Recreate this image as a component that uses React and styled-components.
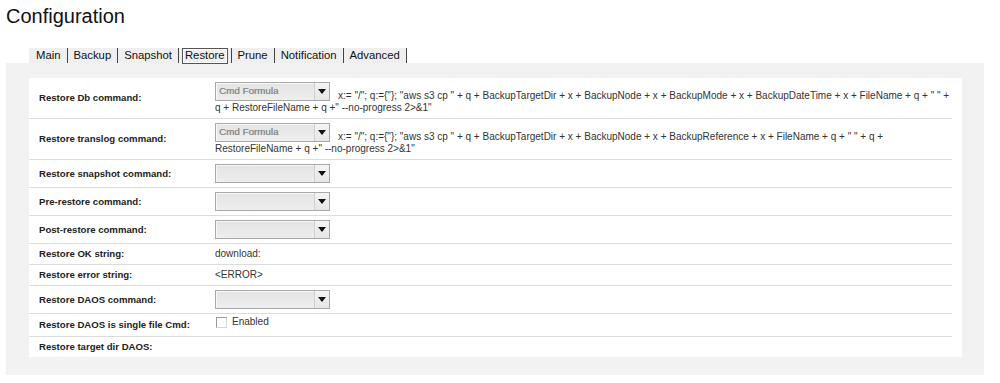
import React from 'react';
import styled, { createGlobalStyle } from 'styled-components';

const GlobalStyle = createGlobalStyle`
  html, body {
    margin: 0;
    padding: 0;
    background: #fff;
    font-family: "Liberation Sans", Arial, sans-serif;
    color: #222;
  }
`;

const Page = styled.div`
  padding: 4px 16px 0 6px;
`;

const Title = styled.h1`
  margin: 0;
  font-size: 20px;
  font-weight: normal;
  line-height: 24px;
  color: #111;
`;

const TabStrip = styled.ul`
  display: flex;
  list-style: none;
  margin: 20px 0 0 23px;
  padding: 0 0 0 1px;
  width: fit-content;
  background: #efefef;
  height: 15px;
  align-items: stretch;
`;

const TabItem = styled.li`
  display: flex;
  align-items: center;
  padding: 0 3px;
  border-right: 1px solid #444;
  font-size: 11.3px;
  line-height: 13px;
  color: #111;
`;

const TabLink = styled.span`
  padding: 0 ${p => (p.$active ? '2px' : '3px')};
  border: ${p => (p.$active ? '1px solid #555' : 'none')};
  box-shadow: ${p => (p.$active ? 'inset 0 0 0 1px #fff' : 'none')};
  height: ${p => (p.$active ? '14px' : 'auto')};
  display: flex;
  align-items: center;
`;

const Panel = styled.div`
  background: #f2f2f2;
  padding: 15px 22px 18px 23px;
`;

const Sheet = styled.div`
  background: #fff;
  padding-right: 10px;
`;

const Row = styled.div`
  display: grid;
  grid-template-columns: 186px 1fr;
  align-items: center;
  border-bottom: ${p => (p.$last ? 'none' : '1px solid #dcdcdc')};
`;

const Label = styled.div`
  padding: 4px 10px;
  font-size: 9.6px;
  font-weight: bold;
  line-height: 12px;
  color: #222;
`;

const Value = styled.div`
  padding: ${p => p.$pad};
  font-size: 10px;
  line-height: 12px;
  color: #333;
  min-height: 12px;
`;

const Select = styled.span`
  display: inline-flex;
  align-items: stretch;
  box-sizing: border-box;
  width: 115px;
  height: 19px;
  vertical-align: ${p => (p.$inline ? 'text-bottom' : 'top')};
  margin-right: 8px;
  border: 1px solid #a9a9a9;
  background: linear-gradient(#e4e4e4, #eeeeee);
  box-shadow: inset 1px 1px 0 #f8f8f8;
`;

const SelectText = styled.span`
  flex: 1;
  padding-left: 3px;
  font-size: 9.8px;
  line-height: 15px;
  color: #8f8f8f;
  text-shadow: 0.3px 0 0 #8f8f8f;
  overflow: hidden;
  white-space: nowrap;
`;

const SelectButton = styled.span`
  width: 14px;
  display: flex;
  align-items: center;
  justify-content: center;
  border-left: 1px solid #d0d0d0;
  background: linear-gradient(#f4f4f4, #e6e6e6);
`;

const Arrow = () => (
  <svg width="8" height="5" viewBox="0 0 8 5">
    <path d="M0 0h8L4 5z" fill="#111" />
  </svg>
);

const Dropdown = ({ text, inline }) => (
  <Select $inline={inline}>
    <SelectText>{text}</SelectText>
    <SelectButton>
      <Arrow />
    </SelectButton>
  </Select>
);

const CheckWrap = styled.label`
  display: inline-flex;
  align-items: center;
  gap: 5px;
  margin-left: 1px;
  position: relative;
  top: -1px;
`;

const CheckBox = styled.span`
  display: inline-block;
  width: 9px;
  height: 9px;
  border: 1px solid #9a9a9a;
  border-right-color: #d6d6d6;
  border-bottom-color: #d6d6d6;
  background: #fdfdfd;
`;

const rows = [
  {
    label: 'Restore Db command:',
    select: 'Cmd Formula',
    text:
      'x:= "/"; q:={"}; "aws s3 cp " + q + BackupTargetDir + x + BackupNode + x + BackupMode + x + BackupDateTime + x + FileName + q + " " + q + RestoreFileName + q +" --no-progress 2>&1"',
  },
  {
    label: 'Restore translog command:',
    select: 'Cmd Formula',
    text:
      'x:= "/"; q:={"}; "aws s3 cp " + q + BackupTargetDir + x + BackupNode + x + BackupReference + x + FileName + q + " " + q + RestoreFileName + q +" --no-progress 2>&1"',
  },
  { label: 'Restore snapshot command:', select: '' },
  { label: 'Pre-restore command:', select: '' },
  { label: 'Post-restore command:', select: '' },
  { label: 'Restore OK string:', text: 'download:' },
  { label: 'Restore error string:', text: '<ERROR>' },
  { label: 'Restore DAOS command:', select: '' },
  { label: 'Restore DAOS is single file Cmd:', check: 'Enabled' },
  { label: 'Restore target dir DAOS:' },
];

const tabs = ['Main', 'Backup', 'Snapshot', 'Restore', 'Prune', 'Notification', 'Advanced'];

const padFor = r => (r.check ? '3px 0 4px' : '4px 0');

export default function App() {
  return (
    <>
      <GlobalStyle />
      <Page>
        <Title>Configuration</Title>
        <TabStrip>
          {tabs.map(t => (
            <TabItem key={t}>
              <TabLink $active={t === 'Restore'}>{t}</TabLink>
            </TabItem>
          ))}
        </TabStrip>
        <Panel>
          <Sheet>
            {rows.map((r, i) => (
              <Row key={r.label} $last={i === rows.length - 1}>
                <Label>{r.label}</Label>
                <Value $pad={padFor(r)}>
                  {r.select !== undefined && <Dropdown text={r.select} inline={!!r.text} />}
                  {r.text}
                  {r.check && (
                    <CheckWrap>
                      <CheckBox />
                      {r.check}
                    </CheckWrap>
                  )}
                </Value>
              </Row>
            ))}
          </Sheet>
        </Panel>
      </Page>
    </>
  );
}
